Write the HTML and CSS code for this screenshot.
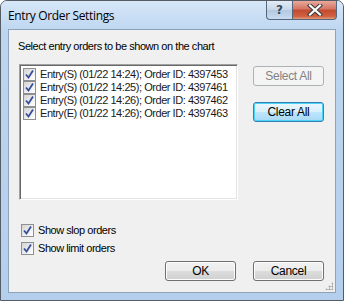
FILE: index.html
```html
<!DOCTYPE html>
<html lang="en">
<head>
    <meta charset="UTF-8">
    <title>Entry Order Settings</title>
    <link rel="stylesheet" href="styles.css">
</head>
<body>
    <div class="window">
        <div class="titlebar">
            <span class="title">Entry Order Settings</span>
            <div class="caption">
                <span class="cap-btn help">?</span>
                <span class="cap-btn close">
                    <svg width="16" height="12" viewBox="0 0 16 12">
                        <path d="M3 1.5 L13 10.5 M13 1.5 L3 10.5" stroke="#3b3b3b" stroke-width="4.2" stroke-linecap="square"/>
                        <path d="M3 1.5 L13 10.5 M13 1.5 L3 10.5" stroke="#fff" stroke-width="2.2" stroke-linecap="square"/>
                    </svg>
                </span>
            </div>
        </div>
        <div class="client">
            <p class="prompt">Select entry orders to be shown on the chart</p>
            <div class="main">
                <div class="listbox">
                    <div class="item"><span class="check"></span>Entry(S) (01/22 14:24); Order ID: 4397453</div>
                    <div class="item"><span class="check"></span>Entry(S) (01/22 14:25); Order ID: 4397461</div>
                    <div class="item"><span class="check"></span>Entry(S) (01/22 14:26); Order ID: 4397462</div>
                    <div class="item"><span class="check"></span>Entry(E) (01/22 14:26); Order ID: 4397463</div>
                </div>
                <div class="side">
                    <button class="btn disabled">Select All</button>
                    <button class="btn default">Clear All</button>
                </div>
            </div>
            <div class="options">
                <label class="option"><span class="check"></span>Show slop orders</label>
                <label class="option"><span class="check"></span>Show limit orders</label>
            </div>
            <div class="footer">
                <button class="btn">OK</button>
                <button class="btn">Cancel</button>
            </div>
            <span class="grip"></span>
        </div>
    </div>
</body>
</html>
```

FILE: styles.css
```css
body {
    margin: 0;
    background: #ffffff;
    font-family: "Liberation Sans", Arial, sans-serif;
    font-size: 11px;
    letter-spacing: -0.45px;
    color: #000;
}

.window {
    width: 342px;
    height: 299px;
    border: 1px solid #555c66;
    border-radius: 7px 7px 0 0;
    background: linear-gradient(to bottom, #c9def4 0px, #bcd5f0 30px, #b4cfec 100%);
    display: flex;
    flex-direction: column;
}

.titlebar {
    height: 28px;
    display: flex;
    align-items: flex-start;
    background: linear-gradient(to bottom, #d6e7f8, #bfd7f1);
    border-radius: 6px 6px 0 0;
}

.title {
    font-family: "Open Sans", sans-serif;
    font-size: 12px;
    letter-spacing: -0.35px;
    color: #000;
    margin: 6px 0 0 7px;
}

.caption {
    margin-left: auto;
    margin-right: 6px;
    display: flex;
}

.cap-btn {
    height: 18px;
    border: 1px solid #56677c;
    border-top: none;
    display: flex;
    align-items: center;
    justify-content: center;
}

.help {
    width: 25px;
    border-right: none;
    border-radius: 0 0 0 4px;
    background: linear-gradient(to bottom, #e3ecf6, #c6d6e8 50%, #b4c8de 51%, #c8dbf0);
    color: #3d4a58;
    font-family: "DejaVu Sans", sans-serif;
    font-size: 12px;
    font-weight: bold;
    letter-spacing: 0;
}

.close {
    width: 43px;
    border-radius: 0 0 4px 0;
    background: linear-gradient(to bottom, #e9a99b, #d47561 45%, #c24a31 50%, #d0613f 85%, #e19a7e);
}

.client {
    position: relative;
    margin: 0 7px 7px 7px;
    flex: 1;
    border: 1px solid #8ea2b8;
    background: #f0f0f0;
    padding: 0 11px 0 9px;
    display: flex;
    flex-direction: column;
}

.prompt {
    margin: 10px 0 0 0;
    line-height: 13px;
}

.main {
    display: flex;
    margin-top: 11px;
}

.listbox {
    width: 215px;
    height: 131px;
    margin-left: 1px;
    background: #fff;
    border: 1px solid;
    border-color: #a0a0a0 #ffffff #ffffff #a0a0a0;
    box-shadow: inset 1px 1px 0 #696969, inset -1px -1px 0 #e3e3e3;
    padding: 3px 0 0 3px;
    overflow: hidden;
    white-space: nowrap;
}

.item {
    height: 13px;
    line-height: 13px;
    display: flex;
    align-items: center;
    color: #1a1a1a;
}

.check {
    flex: none;
    width: 11px;
    height: 11px;
    margin-right: 4px;
    border: 1px solid #8e8f8f;
    background:
        url("data:image/svg+xml,%3Csvg xmlns='http://www.w3.org/2000/svg' width='11' height='11'%3E%3Cpath d='M2 5.5 L4.5 8.5 L9 1.5' fill='none' stroke='%23364e9c' stroke-width='1.8'/%3E%3C/svg%3E") center / 11px 11px no-repeat,
        linear-gradient(135deg, #d4d4d4, #f4f4f4 70%, #fff);
}

.side {
    margin-left: 15px;
    display: flex;
    flex-direction: column;
    gap: 16px;
    padding-top: 2px;
}

.btn {
    width: 71px;
    height: 20px;
    padding: 0;
    font-family: inherit;
    font-size: 12px;
    letter-spacing: -0.3px;
    color: #000;
    border: 1px solid #707070;
    border-radius: 3px;
    background: linear-gradient(to bottom, #f2f2f2, #ebebeb 50%, #dddddd 51%, #cfcfcf);
    box-shadow: inset 0 0 0 1px #fcfcfc;
}

.btn.disabled {
    color: #838383;
    border-color: #adb2b5;
    background: #f4f4f4;
    box-shadow: none;
}

.btn.default {
    border-color: #3c7fb1;
    background: linear-gradient(to bottom, #eaf6fd, #d9f0fc 50%, #bee6fd 51%, #a7d9f5);
    box-shadow: inset 0 0 0 1px #48d4fb;
}

.options {
    margin-top: 24px;
    display: flex;
    flex-direction: column;
    gap: 6px;
}

.option {
    display: flex;
    align-items: center;
    height: 12px;
    padding-left: 3px;
}

.footer {
    margin-top: 7px;
    display: flex;
    justify-content: flex-end;
    gap: 17px;
}

.grip {
    position: absolute;
    right: 2px;
    bottom: 2px;
    width: 8px;
    height: 8px;
    background-image: radial-gradient(circle, #a0a0a0 0.9px, transparent 1.2px);
    background-size: 3px 3px;
    clip-path: polygon(100% 0, 100% 100%, 0 100%);
}
```
